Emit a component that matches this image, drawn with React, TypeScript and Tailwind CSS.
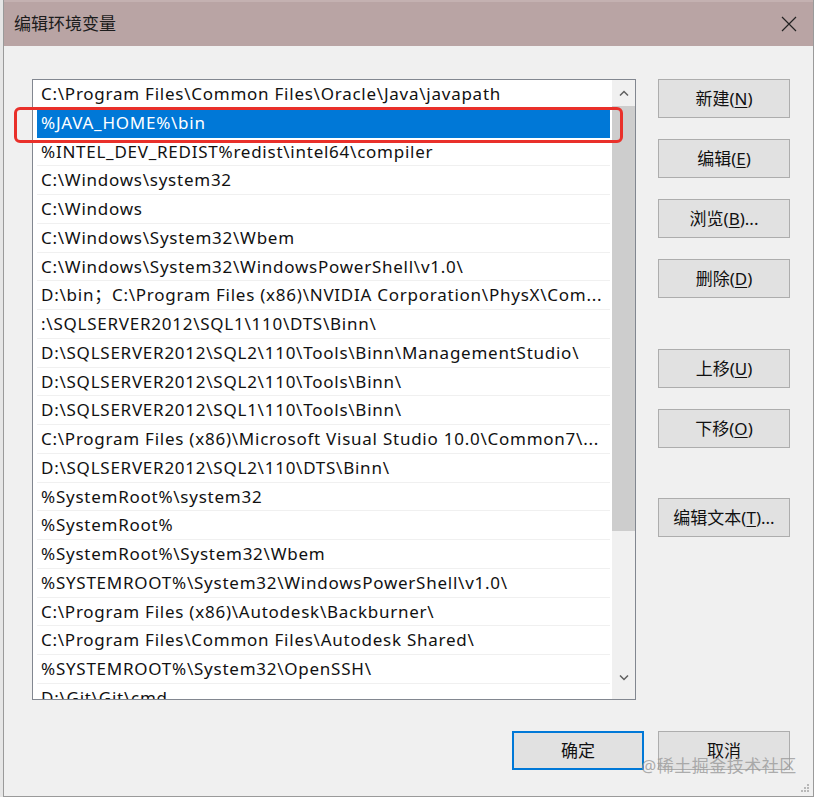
import React from "react";

const paths = [
  "C:\\Program Files\\Common Files\\Oracle\\Java\\javapath",
  "%JAVA_HOME%\\bin",
  "%INTEL_DEV_REDIST%redist\\intel64\\compiler",
  "C:\\Windows\\system32",
  "C:\\Windows",
  "C:\\Windows\\System32\\Wbem",
  "C:\\Windows\\System32\\WindowsPowerShell\\v1.0\\",
  "D:\\bin；C:\\Program Files (x86)\\NVIDIA Corporation\\PhysX\\Com...",
  ":\\SQLSERVER2012\\SQL1\\110\\DTS\\Binn\\",
  "D:\\SQLSERVER2012\\SQL2\\110\\Tools\\Binn\\ManagementStudio\\",
  "D:\\SQLSERVER2012\\SQL2\\110\\Tools\\Binn\\",
  "D:\\SQLSERVER2012\\SQL1\\110\\Tools\\Binn\\",
  "C:\\Program Files (x86)\\Microsoft Visual Studio 10.0\\Common7\\...",
  "D:\\SQLSERVER2012\\SQL2\\110\\DTS\\Binn\\",
  "%SystemRoot%\\system32",
  "%SystemRoot%",
  "%SystemRoot%\\System32\\Wbem",
  "%SYSTEMROOT%\\System32\\WindowsPowerShell\\v1.0\\",
  "C:\\Program Files (x86)\\Autodesk\\Backburner\\",
  "C:\\Program Files\\Common Files\\Autodesk Shared\\",
  "%SYSTEMROOT%\\System32\\OpenSSH\\",
  "D:\\Git\\Git\\cmd",
];

const font = { fontFamily: '"Noto Sans", "Noto Sans CJK SC", sans-serif' };

function Btn({ label, hot, tail, primary }: { label: string; hot?: string; tail?: string; primary?: boolean }) {
  return (
    <div
      className={
        primary
          ? "w-[132px] h-[39px] flex items-center justify-center bg-[#e1e1e1] border-2 border-[#0078d7] text-[17px] text-[#111]"
          : "w-[132px] h-[39px] flex items-center justify-center bg-[#e1e1e1] border border-[#adadad] text-[17px] text-[#111]"
      }
    >
      <span>{label}</span>
      {hot && (
        <span>
          (<span className="underline underline-offset-2">{hot}</span>)
        </span>
      )}
      {tail && <span>{tail}</span>}
    </div>
  );
}

export default function App() {
  return (
    <div className="w-[814px] h-[797px] flex bg-[#dcdcdc] overflow-hidden" style={font}>
      <div className="w-[3px] bg-[#e6e6e6]" />
      <div className="relative flex-1 flex flex-col border-l border-r border-b border-[#9a9a9a] bg-[#f0f0f0]">
        {/* TITLE BAR */}
        <div className="h-[46px] shrink-0 bg-[#b9a4a4] border-t-2 border-[#c4b1b1] flex items-center justify-between pl-[10px] pr-[16px]">
          <span className="text-[17px] text-[#1c1c1c]">编辑环境变量</span>
          <svg width="16" height="16" viewBox="0 0 16 16">
            <path d="M1 1 L15 15 M15 1 L1 15" stroke="#222" strokeWidth="1.2" />
          </svg>
        </div>

        {/* BODY */}
        <div className="flex gap-[22px] pl-[28px] pt-[33px]">
          <div className="w-[604px] h-[621px] border border-[#828790] bg-white flex overflow-hidden">
            <div className="flex-1 pl-[4px] overflow-hidden">
              {paths.map((p, i) => (
                <div
                  key={i}
                  className={
                    i === 1
                      ? "h-[28.75px] flex items-center pl-[4px] bg-[#0078d7] text-white text-[17px] tracking-[0.75px] whitespace-nowrap"
                      : "h-[28.75px] flex items-center pl-[4px] border-b border-[#f0f0f0] text-[#111] text-[17px] tracking-[0.75px] whitespace-nowrap"
                  }
                >
                  {p}
                </div>
              ))}
            </div>
            <div className="w-[23px] ml-[2px] bg-[#f0f0f0] flex flex-col">
              <div className="h-[26px] flex items-center justify-center">
                <svg width="10" height="6" viewBox="0 0 10 6">
                  <path d="M1 5.5 L5 1.5 L9 5.5" stroke="#606060" strokeWidth="1.5" fill="none" />
                </svg>
              </div>
              <div className="h-[425px] bg-[#cdcdcd]" />
              <div className="flex-1" />
              <div className="h-[26px] flex items-center justify-center mb-[8px]">
                <svg width="10" height="6" viewBox="0 0 10 6">
                  <path d="M1 0.5 L5 4.5 L9 0.5" stroke="#606060" strokeWidth="1.5" fill="none" />
                </svg>
              </div>
            </div>
          </div>

          <div className="flex flex-col">
            <Btn label="新建" hot="N" />
            <div className="h-[21px]" />
            <Btn label="编辑" hot="E" />
            <div className="h-[21px]" />
            <Btn label="浏览" hot="B" tail="..." />
            <div className="h-[21px]" />
            <Btn label="删除" hot="D" />
            <div className="h-[51px]" />
            <Btn label="上移" hot="U" />
            <div className="h-[21px]" />
            <Btn label="下移" hot="O" />
            <div className="h-[50px]" />
            <Btn label="编辑文本" hot="T" tail="..." />
          </div>
        </div>

        {/* FOOTER */}
        <div className="flex justify-end gap-[14px] pr-[23px] pt-[31px]">
          <Btn label="确定" primary />
          <Btn label="取消" />
        </div>

        {/* red highlight */}
        <div className="absolute left-[10px] top-[107px] w-[609px] h-[36px] border-[3px] border-[#e9302a] rounded-[6px]" />

        {/* watermark */}
        <div className="absolute left-[637px] top-[753px] text-[17px] text-[#9a9a9a]/80 tracking-[0.5px]">
          @稀土掘金技术社区
        </div>

        {/* resize grip */}
        <svg className="absolute right-[3px] bottom-[3px]" width="10" height="10" viewBox="0 0 10 10">
          <rect x="7" y="1" width="2" height="2" fill="#b8b8b8" />
          <rect x="4" y="4" width="2" height="2" fill="#b8b8b8" />
          <rect x="7" y="4" width="2" height="2" fill="#b8b8b8" />
          <rect x="1" y="7" width="2" height="2" fill="#b8b8b8" />
          <rect x="4" y="7" width="2" height="2" fill="#b8b8b8" />
          <rect x="7" y="7" width="2" height="2" fill="#b8b8b8" />
        </svg>
      </div>
    </div>
  );
}
